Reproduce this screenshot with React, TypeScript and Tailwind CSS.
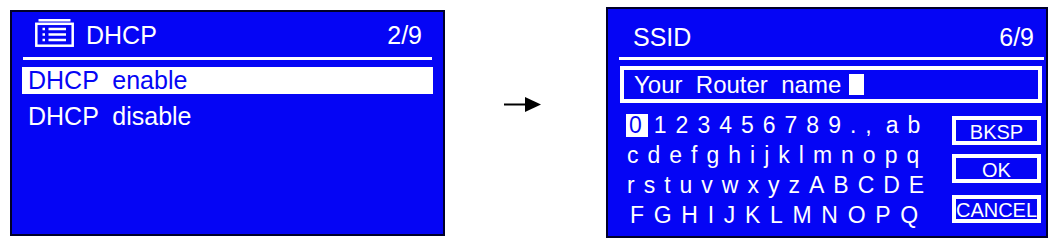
const BLUE = "#0505f5";

function ListIcon() {
  return (
    <svg width="40" height="28" viewBox="0 0 40 28" className="mb-[4px] shrink-0" fill="none" stroke="white" strokeWidth="2.5">
      <line x1="3.5" y1="1.3" x2="35.5" y2="1.3" />
      <rect x="1.3" y="4.8" width="36.4" height="21.9" />
      <line x1="7.5" y1="10" x2="10" y2="10" />
      <line x1="7.5" y1="15.5" x2="10" y2="15.5" />
      <line x1="7.5" y1="21" x2="10" y2="21" />
      <line x1="13.5" y1="10" x2="31" y2="10" />
      <line x1="13.5" y1="15.5" x2="31" y2="15.5" />
      <line x1="13.5" y1="21" x2="31" y2="21" />
    </svg>
  );
}

function Arrow() {
  return (
    <svg width="37" height="16" viewBox="0 0 37 16" className="ml-[59px] mt-[97px] shrink-0">
      <line x1="0" y1="7.5" x2="22" y2="7.5" stroke="black" strokeWidth="2" />
      <polygon points="21,0 37,7.5 21,15" fill="black" />
    </svg>
  );
}

function DhcpScreen() {
  return (
    <div className="ml-[10px] mt-[10px] h-[226px] w-[435px] shrink-0 border-2 border-[#00002a] bg-[#0505f5] px-[11px] text-white">
      <div className="mt-[9px] flex h-[28px] items-center pl-[12px] pr-[10px] text-[25px] leading-[28px]">
        <ListIcon />
        <span className="ml-[11px]">DHCP</span>
        <span className="ml-auto">2/9</span>
      </div>
      <div className="mt-[8px] h-[3px] bg-white" />
      <div className="-mx-px mt-[7px] text-[25px]">
        <div className="h-[27px] whitespace-pre bg-white pl-[6px] leading-[27px] text-[#0505f5]">DHCP  enable</div>
        <div className="mt-[9px] h-[27px] whitespace-pre pl-[6px] leading-[27px]">DHCP  disable</div>
      </div>
    </div>
  );
}

function KeyButton({ label, className }: { label: string; className: string }) {
  return (
    <div
      className={`flex w-[89px] items-center justify-center whitespace-nowrap border-4 border-white pt-[2px] text-[20px] leading-none ${className}`}
    >
      {label}
    </div>
  );
}

function SsidScreen() {
  return (
    <div className="ml-[65px] mt-[7px] h-[231px] w-[442px] shrink-0 border-2 border-[#00002a] bg-[#0505f5] pl-[11px] pr-[2px] text-white">
      <div className="mt-[14px] flex h-[28px] pl-[14px] pr-[10px] text-[25px] leading-[28px]">
        <span>SSID</span>
        <span className="ml-auto">6/9</span>
      </div>
      <div className="mt-[6px] h-[3px] bg-white" />
      <div className="ml-[1px] mr-[2px] mt-[6px] flex h-[37px] items-center border-4 border-white pl-[10px]">
        <span className="whitespace-pre text-[24px] leading-[28px]">Your  Router  name</span>
        <span className="ml-[8px] h-[21px] w-[15px] bg-white" />
      </div>
      <div className="mt-[7px] flex justify-between">
        <div className="ml-[7px] flex flex-col whitespace-pre text-[23px] leading-[30px]">
          <div>
            <span className="mr-[6px] inline-block bg-white pl-[3px] pr-[6px] leading-[23px] text-[#0505f5]">0</span>
            <span className="tracking-[9px]">123456789.,</span>
            <span className="ml-[5px] tracking-[9px]">ab</span>
          </div>
          <div className="pl-[1px] tracking-[9px]">cdefghijklmnopq</div>
          <div className="pl-[1px] tracking-[9px]">rstuvwxyzABCDE</div>
          <div className="pl-[4px] tracking-[9.7px]">FGHIJKLMNOPQ</div>
        </div>
        <div className="mr-[3px] mt-[6px] flex flex-col">
          <KeyButton label="BKSP" className="h-[29px]" />
          <KeyButton label="OK" className="mt-[9px] h-[29px]" />
          <KeyButton label="CANCEL" className="mt-[12px] h-[28px]" />
        </div>
      </div>
    </div>
  );
}

export default function App() {
  return (
    <div className="flex h-[243px] w-[1054px] items-start overflow-hidden bg-white font-['Liberation_Sans',Arial,sans-serif]">
      <DhcpScreen />
      <Arrow />
      <SsidScreen />
    </div>
  );
}
